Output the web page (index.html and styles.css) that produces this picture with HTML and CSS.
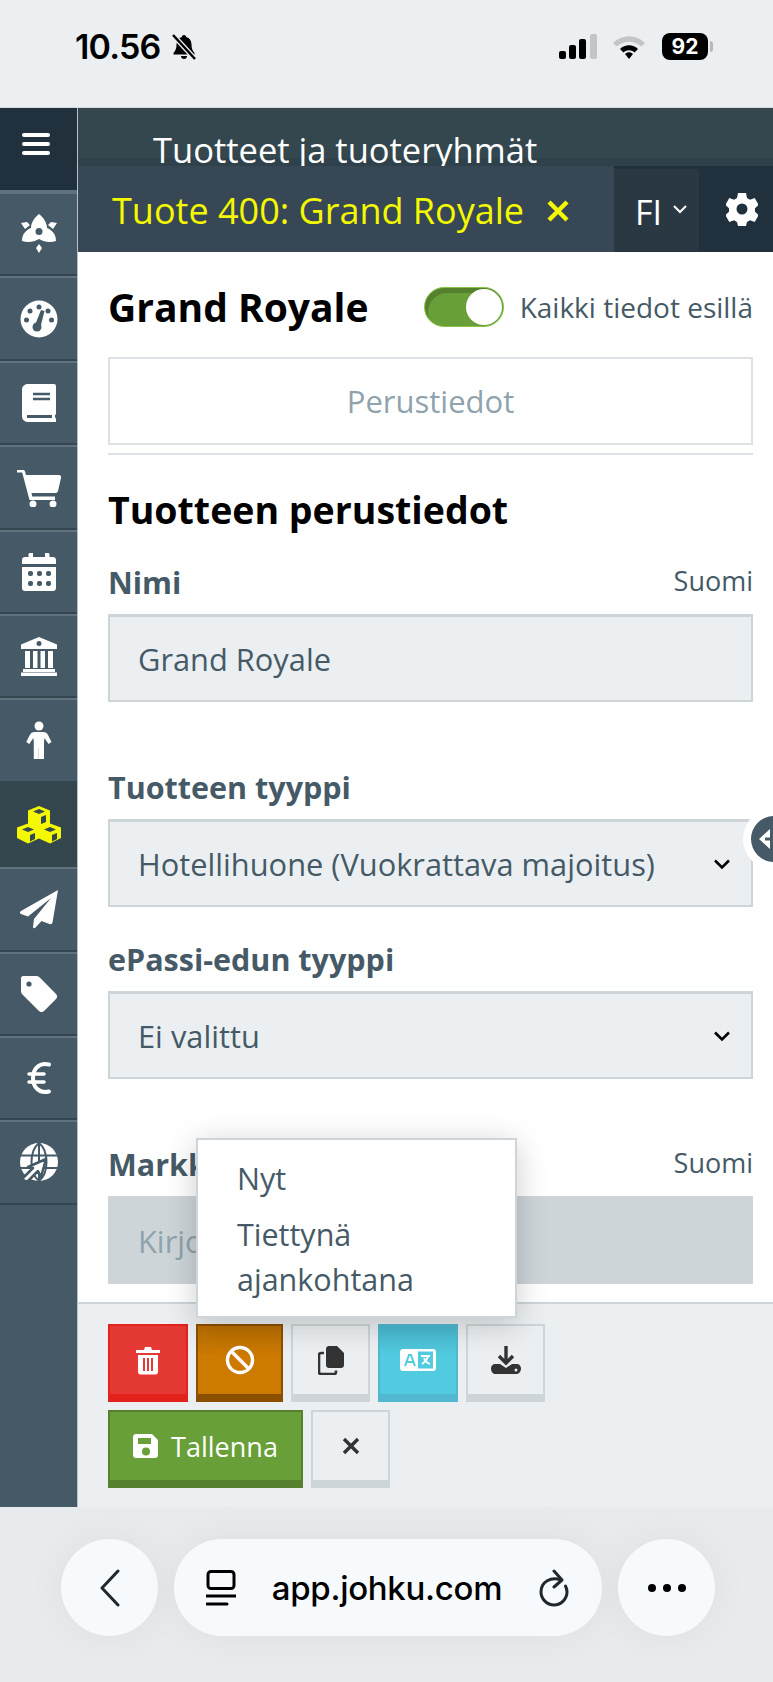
FILE: index.html
```html
<!DOCTYPE html>
<html lang="fi">
<head>
  <meta charset="UTF-8">
  <meta name="viewport" content="width=device-width, initial-scale=1.0">
  <title>Tuotteet ja tuoteryhmät</title>
  <link rel="stylesheet" href="styles.css">
</head>
<body>
  <div class="statusbar">
    <div class="status-left">
      <span class="time">10.56</span>
      <svg width="28" height="28" viewBox="0 0 28 28"><path d="M14 2c1.300 0 2 .9 2.200 2 3.500 1 5.300 3.800 5.300 7.500 0 4 .9 6 3 8.500v1.500H3.500V20c2.100-2.500 3-4.500 3-8.500C6.500 7.800 8.300 5 11.800 4 12 2.900 12.700 2 14 2zM11 23h6c0 1.800-1.300 3-3 3s-3-1.200-3-3z"/><path d="M3 2l22 24" stroke="#ebeff2" stroke-width="5"/><path d="M3 2l22 24" stroke="#000" stroke-width="2.500"/></svg>
    </div>
    <div class="status-right">
      <svg width="38" height="26" viewBox="0 0 38 26"><rect x="0" y="17" width="7" height="8" rx="2"/><rect x="10" y="11" width="7" height="14" rx="2"/><rect x="20" y="5" width="7" height="20" rx="2"/><rect x="31" y="0" width="7" height="25" rx="2" fill="#c2c6c9"/></svg>
      <svg width="34" height="26" viewBox="0 0 34 26"><path d="M1 9C10 0 24 0 33 9l-3.500 3.500C22 6 12 6 4.500 12.500z" fill="#c2c6c9"/><path d="M8 15c5-5 13-5 18 0l-3.500 3.500c-3-3-8-3-11 0z"/><path d="M13 20c2.500-2.200 5.500-2.200 8 0l-4 5z"/></svg>
      <div class="battery"><span>92</span></div>
    </div>
  </div>

  <div class="app">
    <nav class="sidebar">
      <button class="menu-btn">
        <svg width="30" height="24" viewBox="0 0 30 24"><path d="M3 3h24M3 12h24M3 21h24" stroke="#fff" stroke-width="4" stroke-linecap="round"/></svg>
      </button>
      <ul class="side-list">
        <li><svg width="40" height="40" viewBox="0 0 40 40"><path d="M20 0c5 4 8 9 8 14 5 2 9 6 9 13-6 2-12 1-17-2-5 3-11 4-17 2 0-7 4-11 9-13 0-5 3-10 8-14z"/><circle cx="20" cy="17.500" r="3.500" fill="#455a66"/><path d="M20 30l3 4-3 5-3-5z"/><path d="M2 9l6-1 3 3-5 4zM38 9l-6-1-3 3 5 4z"/></svg></li>
        <li><svg width="40" height="40" viewBox="0 0 40 40"><circle cx="20" cy="20" r="18.500"/><g fill="#455a66"><circle cx="20" cy="8" r="2.500"/><circle cx="11" cy="12" r="2.500"/><circle cx="7.500" cy="21" r="2.500"/><circle cx="32.500" cy="21" r="2.500"/><circle cx="29" cy="12" r="2.500"/><circle cx="18" cy="28" r="4.500"/><path d="M16 26l6-15 3.500 1-4 16z"/></g></svg></li>
        <li><svg width="40" height="40" viewBox="0 0 40 40"><path d="M9 1h26a2 2 0 0 1 2 2v28c-1.500 1-1.500 3.500 0 4.500V39H9c-3.500 0-6-2.500-6-6V7c0-3.500 2.500-6 6-6z"/><path d="M14 11h17M14 16h17" stroke="#455a66" stroke-width="2.500"/><path d="M8 33.500h25" stroke="#455a66" stroke-width="3"/></svg></li>
        <li><svg width="46" height="40" viewBox="0 0 46 40"><path d="M1 3h6c1 0 1.800.5 2 1.500L10 8h33c1.500 0 2.500 1.500 2 3l-3 13c-.3 1.200-1 2-2.500 2h-24l.7 3.500H39v3.500H13.500L6.200 5.500H1z"/><circle cx="17" cy="37" r="3.500"/><circle cx="37" cy="37" r="3.500"/></svg></li>
        <li><svg width="40" height="40" viewBox="0 0 40 40"><path d="M11 1h3v4h12V1h3c1 0 1.500.6 1.500 1.500V5H34c1.700 0 3 1.300 3 3v4H3V8c0-1.700 1.300-3 3-3h3.500V2.500C9.500 1.600 10 1 11 1zM3 15h34v21c0 1.700-1.300 3-3 3H6c-1.700 0-3-1.300-3-3z"/><g fill="#455a66"><rect x="9" y="19" width="5" height="5" rx="2"/><rect x="18" y="19" width="5" height="5" rx="2"/><rect x="27" y="19" width="5" height="5" rx="2"/><rect x="9" y="29" width="5" height="5" rx="2"/><rect x="18" y="29" width="5" height="5" rx="2"/><rect x="27" y="29" width="5" height="5" rx="2"/></g></svg></li>
        <li><svg width="40" height="40" viewBox="0 0 40 40"><path d="M20 1l18 7.500V13H2V8.500z"/><circle cx="20" cy="7.500" r="2.500" fill="#455a66"/><path d="M6 15h5v17H6zM14 15h4.500v17H14zM21.500 15H26v17h-4.500zM29 15h5v17h-5zM4 33h32v3H4zM2 36.500h36V40H2z"/></svg></li>
        <li><svg width="40" height="40" viewBox="0 0 40 40"><circle cx="20" cy="5" r="4.500"/><path d="M15.500 11h9c2 0 3.500 1 4.500 3l3.500 7-3 2-4-6-.5 4v17h-5V27h-.2v11H14.800V21l-.5-4-4 6-3-2 3.500-7c1-2 2.500-3 4.700-3z"/></svg></li>
        <li class="active"><svg width="44" height="40" viewBox="0 0 44 40"><path d="M22 1l11 4.500v13L44 22.500V33l-11 5.500-11-5-11 5L0 33V22.500L11 18.500V5.500z" fill="#f4f800"/><g fill="#34474f"><path d="M22 4l6 2.500-6 2.500-6-2.500zM11 22l6 2.500-6 2.500-6-2.500zM33 22l6 2.500-6 2.500-6-2.500z"/><path d="M24 12l5-2v7l-5 2zM13 30l5-2v6l-5 2.500zM35 30l5-2v6l-5 2.500z"/></g></svg></li>
        <li><svg width="40" height="40" viewBox="0 0 40 40"><path d="M39 1L2 22c-1.500 1-1.300 2.500 0 3l7 2.500L32 9 15 30l-1 8c0 1.500 1.500 1.500 2.500.5l6-6.500 8 3c1.500.5 2.500 0 3-1.500z"/></svg></li>
        <li><svg width="40" height="40" viewBox="0 0 40 40"><path d="M4 2h13c1.500 0 3 .7 4 1.700L37 20c1.500 1.500 1.500 3.500 0 5L25 37c-1.500 1.500-3.500 1.500-5 0L3.700 20.700C2.700 19.700 2 18.500 2 17V4c0-1 1-2 2-2z"/><circle cx="10" cy="10" r="2.600" fill="#455a66"/></svg></li>
        <li><svg width="40" height="40" viewBox="0 0 40 40"><path d="M30 6.500C20 4 14 11 14 20c0 9 6 16 16 13.500" fill="none" stroke="#fff" stroke-width="4" stroke-linecap="round"/><path d="M10 16h15M10 24h15" stroke="#fff" stroke-width="3.500" stroke-linecap="round"/></svg></li>
        <li><svg width="40" height="40" viewBox="0 0 40 40"><path d="M20 1a19 19 0 0 1 19 19 19 19 0 0 1-19 19A19 19 0 0 1 1 20 19 19 0 0 1 20 1z"/><path d="M1 13.500h38M1 26h38M20 1v38M20 1c-10 8-10 30 0 38M20 1c10 8 10 30 0 38" fill="none" stroke="#455a66" stroke-width="2"/><path d="M3 37l11-11-5-1 18-8-5 18-3-6-11 11z" stroke="#455a66" stroke-width="2.500" stroke-linejoin="round" fill="#fff"/></svg></li>
      </ul>
    </nav>

    <div class="content">
      <div class="page-head">Tuotteet ja tuoteryhmät</div>
      <div class="tabbar">
        <div class="tab">
          <span>Tuote 400: Grand Royale</span>
          <svg width="24" height="24" viewBox="0 0 24 24"><path d="M3 3l18 18M21 3L3 21" stroke="#f4f800" stroke-width="4.500"/></svg>
        </div>
        <div class="lang">
          <span>FI</span>
          <svg width="16" height="12" viewBox="0 0 16 12"><path d="M2 3l6 6 6-6" fill="none" stroke="#fff" stroke-width="2"/></svg>
        </div>
        <div class="gear">
          <svg width="32" height="34" viewBox="0 0 32 34"><path fill-rule="evenodd" d="M12 1h8l1 5 3 1.700 4.700-1.700 4 7-3.700 3.300v3.400l3.700 3.300-4 7-4.700-1.700L21 30l-1 4h-8l-1-4-3-1.700-4.700 1.700-4-7 3.700-3.300v-3.400L-.7 13l4-7L8 7.700 11 6zM16 11.500a5.500 5.500 0 1 0 0 11 5.500 5.500 0 0 0 0-11z" fill="#fff"/></svg>
        </div>
      </div>

      <main class="main">
        <div class="title-row">
          <h1>Grand Royale</h1>
          <label class="switch-row">
            <span class="switch"><span class="knob"></span></span>
            <span>Kaikki tiedot esillä</span>
          </label>
        </div>
        <div class="section-tab">Perustiedot</div>
        <hr class="rule">
        <h2>Tuotteen perustiedot</h2>

        <div class="field">
          <div class="field-head"><label>Nimi</label><span class="locale">Suomi</span></div>
          <div class="input">Grand Royale</div>
        </div>
        <div class="field type-field">
          <div class="field-head"><label>Tuotteen tyyppi</label></div>
          <div class="input select">
            <span>Hotellihuone (Vuokrattava majoitus)</span>
            <svg width="18" height="12" viewBox="0 0 18 12"><path d="M2 2.500l7 7 7-7" fill="none" stroke="#000" stroke-width="2.600"/></svg>
          </div>
        </div>
        <div class="field epassi-field">
          <div class="field-head"><label>ePassi-edun tyyppi</label></div>
          <div class="input select">
            <span>Ei valittu</span>
            <svg width="18" height="12" viewBox="0 0 18 12"><path d="M2 2.500l7 7 7-7" fill="none" stroke="#000" stroke-width="2.600"/></svg>
          </div>
        </div>
        <div class="field market-field">
          <div class="field-head"><label>Markkinointinimi</label><span class="locale">Suomi</span></div>
          <div class="input dimmed">Kirjoita</div>
        </div>
      </main>

      <footer class="actions">
        <div class="btn-row">
          <button class="btn red"><svg width="26" height="30" viewBox="0 0 26 30"><path d="M1 5h8l1-3h6l1 3h8v3H1zM3 10h20v17c0 1.500-1 2.500-2.500 2.500h-15C4 29.500 3 28.500 3 27zM8 13v13h2V13zM12 13v13h2V13zM16 13v13h2V13z" fill-rule="evenodd" fill="#fff"/></svg></button>
          <button class="btn orange"><svg width="30" height="30" viewBox="0 0 30 30"><circle cx="15" cy="15" r="12.500" fill="none" stroke="#fff" stroke-width="3.400"/><path d="M6 6l18 18" stroke="#fff" stroke-width="3.400"/></svg></button>
          <button class="btn plain"><svg width="26" height="30" viewBox="0 0 26 30"><path d="M11 1h8l7 7v12c0 1.700-1.300 3-3 3H11c-1.700 0-3-1.300-3-3V4c0-1.700 1.300-3 3-3z" fill="#333"/><path d="M6 8H3C1.800 8 1 8.800 1 10v17c0 1.200.8 2 2 2h13c1.200 0 2-.8 2-2v-1.500" fill="none" stroke="#333" stroke-width="2.600"/></svg></button>
          <button class="btn cyan"><svg width="36" height="22" viewBox="0 0 36 22"><rect x="0" y="0" width="36" height="22" rx="3" fill="#fff"/><rect x="18" y="2.500" width="15" height="17" fill="#52cbe0"/><path d="M5 17l4-11h2l4 11M6.500 13h7" fill="none" stroke="#52cbe0" stroke-width="2"/><path d="M21 7h9M28 7c-1 4-3 6-6 8M24 9c1 3 3 5 6 6" fill="none" stroke="#fff" stroke-width="1.800"/></svg></button>
          <button class="btn plain"><svg width="30" height="30" viewBox="0 0 30 30"><path d="M15 1v15" stroke="#333" stroke-width="3.400"/><path d="M8 11l7 7 7-7" fill="none" stroke="#333" stroke-width="3.400"/><path d="M4 19h5l6 4 6-4h5c2 0 4 1.800 4 4.500S28 29 26 29H4c-2 0-4-2.500-4-5.500S2 19 4 19z" fill="#333"/><circle cx="25" cy="25" r="1.500" fill="#ebeff2"/></svg></button>
        </div>
        <div class="btn-row">
          <button class="btn green"><svg width="26" height="26" viewBox="0 0 26 26"><path fill-rule="evenodd" d="M3 1h16l6 6v15c0 1.700-1.300 3-3 3H3c-1.700 0-3-1.300-3-3V4c0-1.700 1.300-3 3-3zM5 5v6h13V5zM13 14.500a4 4 0 1 0 0 8 4 4 0 0 0 0-8z" fill="#fff"/></svg><span>Tallenna</span></button>
          <button class="btn plain"><svg width="20" height="20" viewBox="0 0 20 20"><path d="M3 3l14 14M17 3L3 17" stroke="#333" stroke-width="3.400"/></svg></button>
        </div>
      </footer>
    </div>

    <ul class="popup">
      <li>Nyt</li>
      <li>Tiettynä ajankohtana</li>
    </ul>

    <div class="handle">
      <span class="handle-dot"><svg width="24" height="24" viewBox="0 0 24 24"><path d="M13 2L2 12l11 10z" fill="#fff"/><path d="M8 12h16" stroke="#455a66" stroke-width="3"/></svg></span>
    </div>
  </div>

  <div class="browserbar">
    <button class="round-btn"><svg width="20" height="38" viewBox="0 0 20 38"><path d="M18 2L2 19l16 17" fill="none" stroke="#20282e" stroke-width="3" stroke-linecap="round" stroke-linejoin="round"/></svg></button>
    <div class="urlbar">
      <svg width="30" height="36" viewBox="0 0 30 36"><rect x="2" y="1.500" width="26" height="17" rx="3" fill="none" stroke="#000" stroke-width="3"/><path d="M0 26h30" stroke="#000" stroke-width="3" stroke-linecap="round"/><path d="M1 34h20" stroke="#000" stroke-width="3" stroke-linecap="round"/></svg>
      <span class="url">app.johku.com</span>
      <svg width="32" height="38" viewBox="0 0 32 38"><path d="M23 11C13 7 3 13 3 23c0 7 6 13 13 13s13-6 13-13c0-3-1-5-1.500-6" fill="none" stroke="#20282e" stroke-width="3" stroke-linecap="round"/><path d="M16 2l8 9-8 7" fill="none" stroke="#20282e" stroke-width="3" stroke-linecap="round" stroke-linejoin="round"/></svg>
    </div>
    <button class="round-btn"><svg width="40" height="10" viewBox="0 0 40 10"><circle cx="5" cy="5" r="4"/><circle cx="20" cy="5" r="4"/><circle cx="35" cy="5" r="4"/></svg></button>
  </div>
</body>
</html>
```

FILE: styles.css
```css
:root {
  --slate: #455a66;
  --head: #34474f;
  --dark: #20303d;
  --field: #ebeff2;
  --line: #cdd5d8;
  --yellow: #f4f800;
}

* {
  box-sizing: border-box;
}

html, body {
  margin: 0;
  height: 1682px;
  overflow: hidden;
}

body {
  font-family: 'Open Sans', sans-serif;
  background: var(--field);
  color: var(--slate);
  display: flex;
  flex-direction: column;
}

button {
  font-family: inherit;
  border: none;
  cursor: pointer;
}

/* phone status bar */
.statusbar {
  height: 108px;
  flex: none;
  display: flex;
  justify-content: space-between;
  align-items: flex-start;
  padding: 27px 65px 0 75px;
  border-bottom: 1px solid #d5dadd;
  font-family: Inter, sans-serif;
  color: #000;
}

.status-left {
  display: flex;
  align-items: center;
  gap: 9px;
}

.time {
  font-size: 34px;
  line-height: 40px;
  font-weight: 600;
  letter-spacing: -0.8px;
}

.status-right {
  display: flex;
  align-items: center;
  gap: 15px;
  padding-top: 6px;
}

.battery {
  position: relative;
  width: 46px;
  height: 27px;
  margin-left: 1px;
  background: #000;
  border-radius: 8px;
  color: #fff;
  font-size: 21px;
  font-weight: 700;
  line-height: 27px;
  text-align: center;
}

.battery::after {
  content: "";
  position: absolute;
  right: -5px;
  top: 8px;
  width: 3px;
  height: 11px;
  border-radius: 0 3px 3px 0;
  background: #b5b9bc;
}

.app {
  position: relative;
  height: 1399px;
  flex: none;
  display: flex;
  background: #fff;
}

/* left rail */
.sidebar {
  width: 78px;
  flex: none;
  background: var(--slate);
  border-right: 1px solid #b6c0c6;
}

.menu-btn {
  display: flex;
  align-items: center;
  justify-content: center;
  width: 100%;
  height: 84px;
  background: var(--dark);
  border-bottom: 2px solid #5f727d;
  padding: 0 6px 10px 0;
}

.side-list {
  list-style: none;
  margin: 0;
  padding: 0;
}

.side-list li {
  height: 84.4px;
  display: flex;
  align-items: center;
  justify-content: center;
  border-top: 2px solid #5f727d;
  border-bottom: 2px solid #34464f;
  fill: #fff;
}

.side-list li.active {
  background: var(--head);
  border-top-color: var(--head);
}

.content {
  flex: 1;
  min-width: 0;
  display: flex;
  flex-direction: column;
}

.page-head {
  height: 58px;
  flex: none;
  overflow: hidden;
  padding: 20px 0 0 75px;
  background: linear-gradient(var(--head) 50px, #2f414b 50px);
  color: #fff;
  font-size: 34.500px;
  line-height: 44px;
  white-space: nowrap;
}

.tabbar {
  height: 86px;
  flex: none;
  display: flex;
  background: var(--dark);
}

.tab {
  width: 536px;
  display: flex;
  align-items: center;
  gap: 22px;
  padding: 3px 0 0 34px;
  background: #374755;
  color: var(--yellow);
  font-size: 36px;
  white-space: nowrap;
}

.lang {
  width: 85px;
  margin: 3px 0 1px;
  display: flex;
  align-items: center;
  gap: 10px;
  padding: 3px 0 0 21px;
  background: #2a3843;
  color: #fff;
  font-size: 34px;
}

.lang svg {
  margin-top: -6px;
}

.gear {
  flex: 1;
  display: flex;
  align-items: center;
  justify-content: center;
  padding: 0 0 1px 12px;
}

/* form */
.main {
  flex: 1;
  min-height: 0;
  overflow: hidden;
  padding: 0 20px 0 30px;
}

.title-row {
  height: 105px;
  padding-top: 4px;
  display: flex;
  align-items: center;
  justify-content: space-between;
}

h1 {
  margin: 0;
  font-size: 39px;
  color: #000;
  font-weight: 700;
  white-space: nowrap;
}

.switch-row {
  display: flex;
  align-items: center;
  gap: 16px;
  font-size: 28px;
  white-space: nowrap;
}

.switch {
  position: relative;
  display: block;
  width: 80px;
  height: 40px;
  border-radius: 20px;
  background: #689f38;
  border: 1px solid #8bc34a;
  box-shadow: inset 3px 5px 0 #55802e;
}

.knob {
  position: absolute;
  right: 1px;
  top: 1px;
  width: 36px;
  height: 36px;
  border-radius: 50%;
  background: #fff;
}

.section-tab {
  height: 88px;
  border: 2px solid #dfe2e4;
  display: flex;
  align-items: center;
  justify-content: center;
  color: #8fa3ad;
  font-size: 31px;
}

.rule {
  margin: 8px 0 0;
  border: none;
  border-top: 2px solid #dfe2e4;
}

h2 {
  margin: 30px 0 0;
  color: #000;
  font-size: 37.500px;
  line-height: 50px;
  font-weight: 700;
}

.field-head {
  display: flex;
  justify-content: space-between;
  align-items: center;
  height: 40px;
}

.field-head label {
  font-size: 30.500px;
  font-weight: 700;
}

.locale {
  font-size: 27px;
  margin-top: -4px;
}

.field {
  margin-top: 27px;
}

.input {
  margin-top: 12px;
  height: 88px;
  display: flex;
  align-items: center;
  padding: 0 28px;
  background: var(--field);
  border: 2px solid var(--line);
  border-top-width: 3px;
  font-size: 30.800px;
  color: var(--slate);
}

.select {
  justify-content: space-between;
  padding-right: 20px;
}

.dimmed {
  background: var(--line);
  color: #8fa3ad;
}

.type-field {
  margin-top: 65px;
}

.epassi-field {
  margin-top: 32px;
}

.market-field {
  margin-top: 65px;
}

/* bottom actions */
.actions {
  height: 205px;
  flex: none;
  padding: 20px 0 0 30px;
  background: var(--field);
  border-top: 2px solid var(--line);
  display: flex;
  flex-direction: column;
  gap: 8px;
}

.btn-row {
  display: flex;
  gap: 8px;
}

.btn {
  height: 78px;
  width: 79px;
  display: flex;
  align-items: center;
  justify-content: center;
  padding: 0;
  border: 2px solid transparent;
  border-bottom-width: 8px;
}

.red {
  width: 80px;
  background: #e53935;
  border-color: #e3221c;
}

.orange {
  width: 87px;
  background: linear-gradient(#b86e00, #cc7a00 30px);
  border-color: #8c4f00;
}

.plain {
  background: var(--field);
  border-color: var(--line);
}

.cyan {
  width: 80px;
  background: linear-gradient(#48b8cf, #52cbe0 30px);
  border-color: #52b8d0;
}

.green {
  width: 195px;
  gap: 12px;
  background: #689f38;
  border-color: #55802e;
  color: #fff;
  font-size: 27px;
}

/* dropdown over the form */
.popup {
  position: absolute;
  left: 196px;
  top: 1030px;
  width: 321px;
  height: 180px;
  margin: 0;
  padding: 16px 30px 0 39px;
  list-style: none;
  background: #fff;
  border: 2px solid var(--line);
  box-shadow: 0 6px 30px rgba(0, 0, 0, 0.2);
  font-size: 30.500px;
  line-height: 45px;
}

.popup li + li {
  margin-top: 11px;
}

.handle {
  position: absolute;
  left: 743px;
  top: 700px;
  width: 62px;
  height: 62px;
  border-radius: 50%;
  background: #fff;
  padding: 8px;
}

.handle-dot {
  display: flex;
  align-items: center;
  padding-left: 6px;
  width: 46px;
  height: 46px;
  border-radius: 50%;
  background: var(--slate);
}

/* safari bottom bar */
.browserbar {
  flex: 1;
  display: flex;
  gap: 16px;
  padding: 32px 0 0 61px;
  background: #e8ebee;
}

.round-btn {
  width: 97px;
  height: 97px;
  flex: none;
  display: flex;
  align-items: center;
  justify-content: center;
  border-radius: 50%;
  background: #f7fafd;
  box-shadow: 0 0 40px rgba(0, 0, 0, 0.05);
}

.urlbar {
  width: 428px;
  height: 97px;
  display: flex;
  align-items: center;
  justify-content: space-between;
  padding: 0 32px;
  border-radius: 48px;
  background: #f7fafd;
  box-shadow: 0 0 40px rgba(0, 0, 0, 0.05);
}

.url {
  font-family: Inter, sans-serif;
  font-weight: 500;
  color: #000;
  font-size: 33px;
  letter-spacing: -0.3px;
}
```
